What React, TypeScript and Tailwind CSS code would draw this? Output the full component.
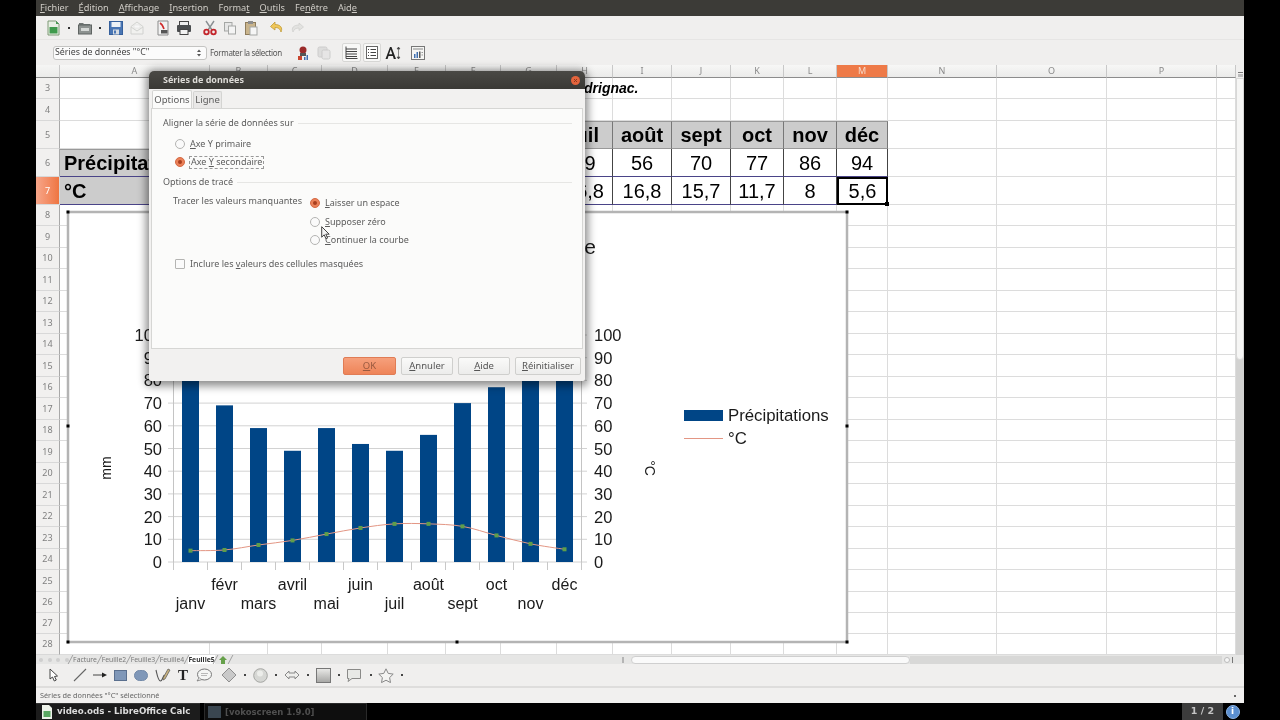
import React from "react";

const UI = "font-['Noto_Sans','Open_Sans',sans-serif]";

const colLetters = ["A","B","C","D","E","F","G","H","I","J","K","L","M","N","O","P",""];
const rowNums = [3,4,5,6,7,8,9,10,11,12,13,14,15,16,17,18,19,20,21,22,23,24,25,26,27,28];
const months = ["janv","févr","mars","avril","mai","juin","juil","août","sept","oct","nov","déc"];
const precip = [85,69,59,49,59,52,49,56,70,77,86,94];
const temps = [5,5.3,7.5,9.5,12.3,15,16.8,16.8,15.7,11.7,8,5.6];
const tempLabels = ["5","5,3","7,5","9,5","12,3","15","16,8","16,8","15,7","11,7","8","5,6"];

function cellClass(r: number, c: number) {
  // c: 0 = A ... 12 = M
  const base = "border-r border-b border-[#dcdcdc] flex items-center min-w-0 whitespace-nowrap text-black font-['Liberation_Sans',sans-serif]";
  if (r === 5) {
    if (c >= 1 && c <= 12) return base + " justify-center bg-[#cccccc] text-[20px] font-bold !border-r-[#777] !border-b-[#999] border-t border-t-[#999]";
  }
  if (r === 6) {
    if (c === 0) return base + " bg-[#cccccc] pl-[4px] text-[20px] font-bold !border-b-[#4a4488] border-t border-t-[#999]";
    if (c >= 1 && c <= 12) return base + " justify-center text-[20px] !border-r-[#444] !border-b-[#4a4488]";
  }
  if (r === 7) {
    if (c === 0) return base + " bg-[#cccccc] pl-[4px] text-[20px] font-bold !border-b-[#4a4488] !border-r-[#444]";
    if (c === 12) return base + " justify-center text-[20px] relative !border-2 !border-black";
    if (c >= 1 && c <= 11) return base + " justify-center text-[20px] !border-r-[#444] !border-b-[#4a4488]";
  }
  return base;
}

function cellText(r: number, c: number) {
  if (r === 3 && c === 7) return <span className="ml-[27px] text-[14px] font-bold italic">drignac.</span>;
  if (r === 5 && c >= 7 && c <= 12) return months[c - 1];
  if (r === 6 && c === 0) return "Précipitations";
  if (r === 7 && c === 0) return "°C";
  if (r === 6 && c >= 7 && c <= 12) return String(precip[c - 1]);
  if (r === 7 && c >= 7 && c <= 12) return tempLabels[c - 1];
  return null;
}

function Sheet() {
  return (
    <div className="grid w-[1200px] h-[590px] bg-white grid-cols-[24px_150px_58px_54px_66px_58px_55px_56px_56px_59px_59px_53px_53px_51px_109px_110px_110px_19px] grid-rows-[13px_21px_22px_28px_28px_28px_21px_22px_21px_22px_21px_22px_21px_22px_21px_22px_21px_22px_21px_22px_21px_22px_21px_22px_21px_21px]">
      <div className="bg-gradient-to-b from-[#f5f5f4] to-[#ebebea] border-r border-b border-r-[#c8c8c8] border-b-[#8c8c8c]" />
      {colLetters.map((l, i) => (
        <div
          key={i}
          className={
            l === "M"
              ? "bg-[#ee7a48] text-[#f6d9c8] text-[9px] flex items-center justify-center border-r border-b border-r-[#c8c8c8] border-b-[#8c8c8c] " + UI
              : "bg-gradient-to-b from-[#f7f7f6] to-[#ebebea] text-[#8a8a8a] text-[9px] flex items-center justify-center border-r border-b border-r-[#c8c8c8] border-b-[#8c8c8c] " + UI
          }
        >
          {l}
        </div>
      ))}
      {rowNums.map((r) => (
        <React.Fragment key={r}>
          <div
            className={
              r === 7
                ? "bg-gradient-to-r from-[#f7a68a] to-[#ee7540] text-white text-[9px] flex items-center justify-center border-r border-b border-[#d8d8d8] " + UI
                : "bg-[#f1f0ef] text-[#808080] text-[9px] flex items-center justify-center border-r border-b border-r-[#a8a8a8] border-b-[#d8d8d8] " + UI
            }
          >
            {r}
          </div>
          {colLetters.map((_, c) => (
            <div key={c} className={cellClass(r, c)}>
              {cellText(r, c)}
              {r === 7 && c === 12 && <span className="absolute -right-[3px] -bottom-[3px] w-[4px] h-[4px] bg-black" />}
            </div>
          ))}
        </React.Fragment>
      ))}
    </div>
  );
}

function smoothPath(pts: [number, number][]) {
  let d = `M${pts[0][0]} ${pts[0][1]}`;
  for (let i = 0; i < pts.length - 1; i++) {
    const p0 = pts[Math.max(0, i - 1)];
    const p1 = pts[i];
    const p2 = pts[i + 1];
    const p3 = pts[Math.min(pts.length - 1, i + 2)];
    const c1x = p1[0] + (p2[0] - p0[0]) / 6;
    const c1y = p1[1] + (p2[1] - p0[1]) / 6;
    const c2x = p2[0] - (p3[0] - p1[0]) / 6;
    const c2y = p2[1] - (p3[1] - p1[1]) / 6;
    d += ` C${c1x} ${c1y} ${c2x} ${c2y} ${p2[0]} ${p2[1]}`;
  }
  return d;
}

function Chart() {
  const y = (v: number) => 562 - v * 2.27;
  const x = (i: number) => 190.5 + 34 * i;
  const ticks = [0,10,20,30,40,50,60,70,80,90,100];
  const pts = temps.map((t, i) => [x(i), y(t)] as [number, number]);
  const handles: [number, number][] = [[68,212],[457,212],[847,212],[68,426],[847,426],[68,642],[457,642],[847,642]];
  return (
    <svg
      width="784"
      height="435"
      viewBox="66 210 784 435"
      className="absolute left-[30px] top-[145px] font-['Liberation_Sans',sans-serif]"
    >
      <rect x="68" y="212" width="779" height="430" fill="#fff" stroke="#b4b4b4" strokeWidth="2.5" />
      {ticks.map((t) => (
        <line key={t} x1="168" x2="587" y1={y(t)} y2={y(t)} stroke="#d2d2d2" strokeWidth="1" />
      ))}
      <line x1="173.5" x2="173.5" y1={y(100)} y2="562" stroke="#c4c4c4" />
      <line x1="581.5" x2="581.5" y1={y(100)} y2="562" stroke="#c4c4c4" />
      {Array.from({ length: 13 }).map((_, i) => (
        <line key={i} x1={173.5 + 34 * i} x2={173.5 + 34 * i} y1="562" y2="570" stroke="#c8c8c8" />
      ))}
      {precip.map((v, i) => (
        <rect key={i} x={182 + 34 * i} y={y(v)} width="17" height={562 - y(v)} fill="#004586" />
      ))}
      <path d={smoothPath(pts)} fill="none" stroke="#e39684" strokeWidth="1" />
      {pts.map((p, i) => (
        <rect key={i} x={p[0] - 2} y={p[1] - 2} width="4" height="4" fill="#5f9e4a" />
      ))}
      {ticks.map((t) => (
        <React.Fragment key={t}>
          <text x="162" y={y(t) + 6} textAnchor="end" fontSize="16.5" fill="#1a1a1a">{t}</text>
          <text x="594" y={y(t) + 6} fontSize="16.5" fill="#1a1a1a">{t}</text>
        </React.Fragment>
      ))}
      {months.map((m, i) => (
        <text key={m} x={x(i)} y={i % 2 ? 590 : 608.5} textAnchor="middle" fontSize="16" fill="#1a1a1a">{m}</text>
      ))}
      <text x="596" y="254" textAnchor="end" fontSize="21" fill="#1a1a1a">e</text>
      <text transform="translate(111 468) rotate(-90)" textAnchor="middle" fontSize="14" fill="#1a1a1a">mm</text>
      <text transform="translate(645 468) rotate(90)" textAnchor="middle" fontSize="14" fill="#1a1a1a">°C</text>
      <rect x="684" y="410" width="39" height="11" fill="#004586" />
      <text x="728" y="421" fontSize="16.8" fill="#1a1a1a">Précipitations</text>
      <line x1="684" x2="723" y1="438.5" y2="438.5" stroke="#e39684" />
      <text x="728" y="444" fontSize="16.8" fill="#1a1a1a">°C</text>
      {handles.map(([a, b], i) => (
        <rect key={i} x={a - 1.5} y={b - 1.5} width="3" height="3" fill="#000" />
      ))}
    </svg>
  );
}

/* ---------- toolbar icons ---------- */
const I = ({ children, cls = "" }: { children: React.ReactNode; cls?: string }) => (
  <svg width="16" height="16" viewBox="0 0 16 16" className={"shrink-0 " + cls}>{children}</svg>
);
const Dot = ({ cls }: { cls: string }) => <span className={"w-[2px] h-[2px] bg-[#333] shrink-0 " + cls} />;

const NewDoc = ({ cls }: { cls: string }) => (
  <I cls={cls}><path d="M3 1h8l3 3v11H3z" fill="#e8efe4" stroke="#7f9a77" /><rect x="4.5" y="7" width="8" height="6.5" fill="#3f9a4c" /><path d="M11 1l3 3h-3z" fill="#4a9a55" /></I>
);
const Open = ({ cls }: { cls: string }) => (
  <I cls={cls}><path d="M2 3h4l1 1h6v3H2z" fill="#6f7472" /><rect x="1.5" y="5" width="13" height="9" fill="#8d9290" stroke="#5f6462" /><rect x="4" y="8" width="8" height="3" fill="#d5d8d6" /></I>
);
const Save = ({ cls }: { cls: string }) => (
  <I cls={cls}><rect x="1.5" y="1.5" width="13" height="13" fill="#4a76b4" stroke="#36609c" /><rect x="3.5" y="2" width="9" height="5" fill="#eef2f6" /><rect x="5" y="9.5" width="6" height="5" fill="#d8dde2" /><rect x="6" y="10.5" width="2" height="3" fill="#4a76b4" /></I>
);
const Mail = ({ cls }: { cls: string }) => (
  <I cls={cls + " opacity-70"}><path d="M2 6.5L8 2l6 4.5V14H2z" fill="#f2f2f0" stroke="#c4c6c3" /><path d="M2 7l6 4 6-4" fill="none" stroke="#c4c6c3" /><rect x="5" y="5" width="6" height="3" fill="#fbfbfb" stroke="#d4d4d2" strokeWidth=".5" /></I>
);
const Pdf = ({ cls }: { cls: string }) => (
  <I cls={cls}><path d="M3 1h10v14H3z" fill="#f2f2f2" stroke="#8b8b8b" /><path d="M5 3c2 1 3 3 4 6" stroke="#cf2a2a" strokeWidth="1.6" fill="none" /><rect x="6" y="10" width="6.5" height="3.5" fill="#555" /></I>
);
const Printer = ({ cls }: { cls: string }) => (
  <I cls={cls}><rect x="3.5" y="1.5" width="9" height="4" fill="#eee" stroke="#444" /><rect x="1" y="5" width="14" height="7" rx="1" fill="#4a4d4f" /><rect x="4" y="9.5" width="8" height="5" fill="#f2f2f2" stroke="#444" /></I>
);
const Cut = ({ cls }: { cls: string }) => (
  <I cls={cls}><path d="M4 1l6 9M12 1l-6 9" stroke="#8a8f92" strokeWidth="1.4" /><circle cx="4.5" cy="12" r="2.3" fill="none" stroke="#c3252b" strokeWidth="1.8" /><circle cx="11.5" cy="12" r="2.3" fill="none" stroke="#c3252b" strokeWidth="1.8" /></I>
);
const Copy = ({ cls }: { cls: string }) => (
  <I cls={cls}><rect x="2.5" y="2.5" width="7.5" height="8.5" fill="#e6e6e6" stroke="#a5a7a5" /><rect x="6.5" y="6" width="7" height="8" fill="#f4f4f4" stroke="#a5a7a5" /></I>
);
const Paste = ({ cls }: { cls: string }) => (
  <I cls={cls}><rect x="2.5" y="2.5" width="10" height="12" fill="#c9b48c" stroke="#8e7c5b" /><rect x="5" y="1" width="5" height="3" fill="#8d8d8d" /><rect x="7" y="7" width="7" height="8" fill="#f6f6f6" stroke="#a5a7a5" /></I>
);
const Undo = ({ cls }: { cls: string }) => (
  <I cls={cls}><path d="M6 2L1.5 6.5 6 10V7.5c3 0 5 1 6 4.5 2-4-.5-7.5-6-7.5z" fill="#f0c75a" stroke="#c09a35" strokeWidth=".8" /></I>
);
const Redo = ({ cls }: { cls: string }) => (
  <I cls={cls}><path d="M10 3l4.5 4L10 10.5V8c-3 0-5 1-6 4C2 8 4.500 5 10 5z" fill="#e2e2e0" stroke="#d0d0ce" strokeWidth=".8" /></I>
);

function MainToolbar() {
  return (
    <div className="h-[24px] flex items-center bg-[#f0efee] border-b border-[#e6e5e4]">
      <NewDoc cls="ml-[9px]" />
      <Dot cls="ml-[7px]" />
      <Open cls="ml-[7px]" />
      <Dot cls="ml-[6px]" />
      <Save cls="ml-[7px]" />
      <Mail cls="ml-[5px]" />
      <Pdf cls="ml-[10px]" />
      <Printer cls="ml-[5px]" />
      <Cut cls="ml-[10px]" />
      <Copy cls="ml-[4px]" />
      <Paste cls="ml-[5px]" />
      <Undo cls="ml-[10px]" />
      <Redo cls="ml-[4px]" />
    </div>
  );
}

function FormatToolbar() {
  return (
    <div className="h-[25px] flex items-center bg-[#f0efee]">
      <div className={"ml-[17px] w-[154px] h-[14px] bg-[#fbfbfb] border border-[#c4c4c2] rounded-[3px] flex items-center justify-between px-[1px] text-[8.800px] text-[#444] " + UI}>
        <span>Séries de données "°C"</span>
        <svg width="6" height="10" viewBox="0 0 6 10" className="mr-[3px]"><path d="M1 4l2-2.500L5 4zM1 6l2 2.500L5 6z" fill="#555" /></svg>
      </div>
      <span className={"ml-[3px] w-[75px] text-[8px] text-[#555] whitespace-nowrap tracking-[-0.35px] " + UI}>Formater la sélection</span>
      <I cls="ml-[10px]"><circle cx="8" cy="5" r="3.500" fill="#9a2a2a" /><rect x="5" y="8" width="6" height="3" fill="#555" /><rect x="3" y="11" width="4" height="4" fill="#c9452e" /><rect x="9" y="12" width="1.500" height="3" fill="#3f6fb0" /><rect x="11.500" y="10" width="1.500" height="5" fill="#3f6fb0" /></I>
      <I cls="ml-[5px] opacity-50"><rect x="2" y="2" width="9" height="10" rx="1.500" fill="#ccc" stroke="#aaa" /><rect x="6" y="5" width="8" height="9" rx="1.500" fill="#ddd" stroke="#aaa" /></I>
      <div className="ml-[10px] w-[19px] h-[19px] rounded-[2px] bg-[#f8f8f7] border border-[#d8d8d6] flex items-center justify-center">
        <svg width="13" height="13" viewBox="0 0 13 13"><path d="M1 .5v12h11.500M1 3h11M1 5.500h11M1 8h11M1 10.500h11" stroke="#444" fill="none" strokeWidth="1" /></svg>
      </div>
      <div className="ml-[2px] w-[18px] h-[19px] rounded-[2px] bg-[#f8f8f7] border border-[#d8d8d6] flex items-center justify-center">
        <svg width="12" height="13" viewBox="0 0 12 13"><rect x=".5" y=".5" width="11" height="12" fill="#fff" stroke="#666" /><path d="M2 3.500h1M2 6.500h1M2 9.500h1M4.500 3.500h5.500M4.500 6.500h5.500M4.500 9.500h5.500" stroke="#444" /></svg>
      </div>
      <svg width="16" height="16" viewBox="0 0 16 16" className="ml-[4px] shrink-0">
        <path d="M.500 14L5 2h1.500L11 14H8.800l-.9-3H3.500l-.9 3zM4 9.300h3.300L5.700 4.500z" fill="#222" />
        <path d="M13.500 2v12M12 4l1.500-2L15 4zM12 12l1.500 2 1.500-2z" fill="#444" stroke="#444" strokeWidth=".6" />
      </svg>
      <I cls="ml-[9px]"><rect x="1.500" y="1.500" width="13" height="13" fill="#f6f6f4" stroke="#777" /><path d="M3 4h10" stroke="#888" /><rect x="4" y="9" width="1.500" height="4" fill="#3f6fb0" /><rect x="6.500" y="7" width="1.500" height="6" fill="#3f6fb0" /><rect x="9" y="6.500" width="1.500" height="6.500" fill="#555" /><path d="M11.500 7.500h1.500M11.500 10h1.500" stroke="#999" /></I>
    </div>
  );
}

function TabSep() {
  return <span className="w-px h-[9px] bg-[#a0a0a0] -skew-x-[28deg] shrink-0" />;
}

function TabsRow() {
  const names = ["Facture","Feuille2","Feuille3","Feuille4"];
  return (
    <div className={"h-[9px] flex items-center bg-[#e6e6e5] text-[6.800px] text-[#777] " + UI}>
      <div className="ml-[3px] w-[30px] flex items-center justify-between text-[#b0b0b0]">
        <span className="w-[4px] h-[4px] rounded-full bg-[#cfcfcf]" />
        <span className="w-[4px] h-[4px] rounded-full bg-[#cfcfcf]" />
        <span className="w-[4px] h-[4px] rounded-full bg-[#cfcfcf]" />
        <span className="w-[4px] h-[4px] rounded-full bg-[#cfcfcf]" />
      </div>
      <span className="ml-[1px]" />
      {names.map((n) => (
        <React.Fragment key={n}>
          <TabSep />
          <span className="w-[28px] text-center leading-[9px] whitespace-nowrap">{n}</span>
        </React.Fragment>
      ))}
      <TabSep />
      <span className="w-[27px] ml-[1px] text-center leading-[9px] bg-white font-bold text-[#333] whitespace-nowrap">Feuille5</span>
      <TabSep />
      <span className="w-[14px] flex justify-center">
        <svg width="10" height="8" viewBox="0 0 10 8"><path d="M5 0l4 4H7v4H3V4H1z" fill="#66a04a" /></svg>
      </span>
      <TabSep />
      <span className="ml-[391px] w-[2px] h-[6px] bg-[#b5b5b5]" />
      <span className="ml-[7px] w-[279px] h-[8px] bg-[#fafafa] border border-[#cfcfcf] rounded-[4px]" />
      <span className="w-[312px] h-[8px] bg-[#d8d8d7]" />
      <span className="w-[6px] h-[6px] ml-[2px] rounded-full bg-[#f6f6f6] border border-[#bbb]" />
      <span className="ml-[2px] w-px h-[6px] bg-[#777]" />
    </div>
  );
}

function DrawToolbar() {
  const dot = "w-[2px] h-[2px] bg-[#444] shrink-0";
  return (
    <div className="h-[24px] flex items-center bg-[#f0efee] border-b-2 border-[#dedddc]">
      <svg width="12" height="15" viewBox="0 0 12 15" className="ml-[12px] shrink-0"><path d="M2 1l0 10 2.500-2 1.800 4 2-1-1.800-3.500 3-.5z" fill="#fff" stroke="#444" strokeWidth="1" /></svg>
      <svg width="14" height="14" viewBox="0 0 14 14" className="ml-[13px] shrink-0"><path d="M1 13L13 1" stroke="#666" strokeWidth="1.100" /></svg>
      <svg width="14" height="8" viewBox="0 0 14 8" className="ml-[6px] shrink-0"><path d="M0 4h10" stroke="#444" strokeWidth="1" /><path d="M9 1.500L14 4 9 6.500z" fill="#222" /></svg>
      <span className="ml-[7px] w-[13px] h-[11px] bg-[#7f97b8] border border-[#5a6f8e] shrink-0" />
      <span className="ml-[7px] w-[14px] h-[11px] rounded-full bg-[#7f97b8] border border-[#7289a8] shrink-0" />
      <svg width="16" height="17" viewBox="0 0 16 17" className="ml-[7px] shrink-0"><path d="M1 3c1 4 2 11 4.500 11 2 0 2-4 4-6" fill="none" stroke="#555" strokeWidth="1.100" /><path d="M8 11l5-9 2 1-5 9-2 1z" fill="#c9b27e" stroke="#555" strokeWidth=".7" /></svg>
      <span className="ml-[6px] w-[12px] text-center text-[15px] leading-none font-bold text-[#222] shrink-0 font-['Liberation_Serif',serif]">T</span>
      <svg width="16" height="14" viewBox="0 0 16 14" className="ml-[7px] shrink-0"><ellipse cx="8.500" cy="6.500" rx="7" ry="5.500" fill="#f4f5f4" stroke="#777" /><path d="M3 10l-2 3 5-1.500" fill="#f4f5f4" stroke="#777" strokeWidth=".8" /><path d="M5 5.500h7M5 7.500h6" stroke="#aaa" strokeWidth=".8" /></svg>
      <svg width="16" height="16" viewBox="0 0 16 16" className="ml-[9px] shrink-0"><path d="M8 1l7 7-7 7-7-7z" fill="#c9c9c9" stroke="#8f8f8f" /></svg>
      <span className={dot + " ml-[7px]"} />
      <svg width="15" height="15" viewBox="0 0 15 15" className="ml-[7px] shrink-0"><circle cx="7.500" cy="7.500" r="6.800" fill="#d6d7d4" stroke="#a5a6a3" /><circle cx="7" cy="5.500" r="3" fill="#ecedea" /></svg>
      <span className={dot + " ml-[7px]"} />
      <svg width="16" height="10" viewBox="0 0 16 10" className="ml-[7px] shrink-0"><path d="M1 5l4-4v2h6V1l4 4-4 4V7H5v2z" fill="#eeeeec" stroke="#888" /></svg>
      <span className={dot + " ml-[7px]"} />
      <span className="ml-[7px] w-[15px] h-[15px] bg-gradient-to-b from-[#e8e8e6] to-[#a8a8a6] border border-[#777] shrink-0" />
      <span className={dot + " ml-[7px]"} />
      <svg width="16" height="15" viewBox="0 0 16 15" className="ml-[6px] shrink-0"><path d="M1.500 1.500h13v9H6l-4 3 1-3H1.500z" fill="#e8e9e6" stroke="#8a8a88" /></svg>
      <span className={dot + " ml-[8px]"} />
      <svg width="16" height="15" viewBox="0 0 16 15" className="ml-[6px] shrink-0"><path d="M8 .800l2.200 4.600 5 .7-3.600 3.500.9 5L8 12.200 3.500 14.600l.9-5L.800 6.100l5-.7z" fill="#f4f4f2" stroke="#888" /></svg>
      <span className={dot + " ml-[7px]"} />
    </div>
  );
}

function Radio({ on }: { on?: boolean }) {
  return (
    <span className={on
      ? "w-[10px] h-[10px] shrink-0 rounded-full bg-[#ea8058] border border-[#d56a44] flex items-center justify-center"
      : "w-[10px] h-[10px] shrink-0 rounded-full bg-[#fafafa] border border-[#b4b4b2]"}>
      {on && <span className="w-[4px] h-[4px] rounded-full bg-[#a83e1e]" />}
    </span>
  );
}

function Section({ title }: { title: string }) {
  return (
    <div className="flex items-center h-[12px] mr-[10px]">
      <span className="whitespace-nowrap">{title}</span>
      <span className="flex-1 h-px bg-[#e6e6e4] ml-[4px]" />
    </div>
  );
}

function DialogButton({ children, w, primary }: { children: React.ReactNode; w: string; primary?: boolean }) {
  return (
    <div className={
      (primary
        ? "bg-gradient-to-b from-[#f6a07c] to-[#ee8458] border-[#e07c55] text-[#9a5a40] "
        : "bg-gradient-to-b from-[#fafaf9] to-[#ececeb] border-[#cfcfcd] text-[#555] ") +
      w + " h-[18px] rounded-[2px] border flex items-center justify-center"}>
      {children}
    </div>
  );
}

function Dialog() {
  return (
    <div className={"absolute left-[149px] top-[71px] w-[436px] h-[310px] flex flex-col rounded-t-[5px] rounded-b-[2px] bg-[#f2f1f0] shadow-[0_2px_8px_3px_rgba(0,0,0,0.45)] text-[9.500px] text-[#5c5c5c] leading-[12px] " + UI}>
      <div className="h-[18px] rounded-t-[5px] bg-gradient-to-b from-[#4a4945] to-[#3a3935] flex items-center justify-between pl-[14px] pr-[5px]">
        <span className="text-[9px] font-bold text-[#dedcd8]">Séries de données</span>
        <span className="w-[9px] h-[9px] rounded-full bg-[#e4643c] flex items-center justify-center">
          <svg width="5" height="5" viewBox="0 0 5 5"><path d="M1 1l3 3M4 1L1 4" stroke="#8a3a20" /></svg>
        </span>
      </div>
      <div className="h-[19px] flex items-end pl-[3px] gap-[1px]">
        <div className="w-[40px] h-[18px] bg-[#fbfbfa] border border-b-0 border-[#d4d4d2] rounded-t-[2px] flex items-center justify-center text-[#5a5a5a]">Options</div>
        <div className="w-[29px] h-[17px] bg-[#e9e8e7] border border-b-0 border-[#d4d4d2] rounded-t-[2px] flex items-center justify-center">Ligne</div>
      </div>
      <div className="mx-[2px] h-[241px] bg-[#fbfbfa] border border-[#d6d6d4] pl-[11px] pt-[8px] flex flex-col text-[9px]">
        <Section title="Aligner la série de données sur" />
        <div className="mt-[6px] ml-[12px] h-[18px] flex items-center gap-[5px]">
          <Radio /><span><u>A</u>xe Y primaire</span>
        </div>
        <div className="ml-[12px] h-[18px] flex items-center gap-[4px]">
          <Radio on /><span className="border border-dashed border-[#999] px-[1px] h-[13px] flex items-center whitespace-pre">Axe <u>Y</u> secondaire</span>
        </div>
        <div className="mt-[5px]"><Section title="Options de tracé" /></div>
        <div className="mt-[6px] ml-[10px] flex">
          <span className="w-[137px] mt-[1px] whitespace-nowrap">Tracer les valeurs manquantes</span>
          <div className="flex flex-col">
            <div className="h-[18px] flex items-center gap-[5px]"><Radio on /><span><u>L</u>aisser un espace</span></div>
            <div className="h-[19px] flex items-center gap-[5px]"><Radio /><span><u>S</u>upposer zéro</span></div>
            <div className="h-[18px] flex items-center gap-[5px]"><Radio /><span><u>C</u>ontinuer la courbe</span></div>
          </div>
        </div>
        <div className="mt-[6px] ml-[12px] h-[18px] flex items-center gap-[5px]">
          <span className="w-[10px] h-[10px] rounded-[1px] bg-[#fafafa] border border-[#b4b4b2] shrink-0" />
          <span>Inclure les <u>v</u>aleurs des cellules masquées</span>
        </div>
      </div>
      <div className="flex-1 flex items-center justify-end pr-[4px] gap-[5px] pt-[1px]">
        <DialogButton w="w-[53px]" primary><u>O</u>K</DialogButton>
        <DialogButton w="w-[52px]"><u>A</u>nnuler</DialogButton>
        <DialogButton w="w-[52px]"><u>A</u>ide</DialogButton>
        <DialogButton w="w-[66px]"><u>R</u>éinitialiser</DialogButton>
      </div>
    </div>
  );
}

export default function App() {
  const menu: [string, string][] = [["F","ichier"],["É","dition"],["A","ffichage"],["I","nsertion"],["Forma","t"],["O","utils"],["Fe","nêtre"],["Aid","e"]];
  return (
    <div className="relative w-[1280px] h-[720px] overflow-hidden bg-black blur-[0.4px]">
      <div className="ml-[36px] w-[1208px] h-[703px] flex flex-col">
        <div className={"h-[16px] bg-[#3c3b37] flex items-center pl-[4px] gap-[10px] text-[9.200px] text-[#cfccc6] " + UI}>
          {menu.map(([a, b], i) =>
            i === 4 || i === 6 || i === 7 ? (
              <span key={i}>{a}<u>{b[0]}</u>{b.slice(1)}</span>
            ) : (
              <span key={i}><u>{a}</u>{b}</span>
            )
          )}
        </div>
        <MainToolbar />
        <FormatToolbar />
        <div className="relative flex">
          <Sheet />
          <div className="w-[8px] h-[590px] flex flex-col bg-[#d2d2d1]">
            <div className="h-[13px] bg-[#f0efee] flex flex-col items-center justify-end gap-[1px] pb-[1px]">
              <span className="w-[5px] h-px bg-[#777]" />
              <span className="w-[5px] h-[3px] bg-[#bbb]" />
            </div>
            <div className="h-[282px] bg-[#f6f6f5] border border-[#d8d8d7] rounded-b-[4px]" />
          </div>
          <Chart />
        </div>
        <TabsRow />
        <DrawToolbar />
        <div className={"flex-1 bg-[#f1f0ef] flex items-center justify-between pl-[4px] pr-[8px] text-[7.300px] text-[#666] " + UI}>
          <span>Séries de données "°C" sélectionné</span>
          <span className="w-[2px] h-[2px] bg-[#666]" />
        </div>
      </div>
      <div className={"h-[17px] flex items-stretch bg-black font-['DejaVu_Sans',sans-serif]"}>
        <div className="ml-[36px] w-[164px] bg-[#1c1c1c] border-t border-[#333] flex items-center pl-[6px] gap-[5px] text-[8.700px] font-bold text-[#dcdcdc]">
          <svg width="10" height="14" viewBox="0 0 10 14" className="shrink-0"><path d="M0 0h7l3 3v11H0z" fill="#eef3ea" /><rect x="1.500" y="6" width="7" height="6" fill="#5aa862" /></svg>
          <span className="whitespace-nowrap">video.ods - LibreOffice Calc</span>
        </div>
        <div className="ml-[4px] w-[163px] bg-[#0e0e0e] border border-b-0 border-[#2a2a2a] flex items-center pl-[3px] gap-[4px] text-[8.500px] font-bold text-[#4f4f4f]">
          <span className="w-[13px] h-[12px] bg-[#3a4650] shrink-0" />
          <span className="whitespace-nowrap">[vokoscreen 1.9.0]</span>
        </div>
        <div className="flex-1" />
        <div className="w-[41px] bg-[#3c3c3c] flex items-center justify-center text-[9.500px] font-bold text-[#c4c4c4]">1 / 2</div>
        <div className="ml-[2px] mr-[40px] w-[15px] flex items-center justify-center">
          <span className="w-[14px] h-[14px] rounded-full bg-[#5b8fd0] border border-[#8db4e4] flex items-center justify-center text-[9px] font-bold text-white">i</span>
        </div>
      </div>
      <Dialog />
      <svg width="10" height="14" viewBox="0 0 10 14" className="absolute left-[321px] top-[226px]">
        <path d="M.700.700v10.500l2.500-2.400 1.800 4 1.600-.7-1.800-3.900h3.400z" fill="#f4f4f4" stroke="#444" strokeWidth="1" />
      </svg>
    </div>
  );
}
